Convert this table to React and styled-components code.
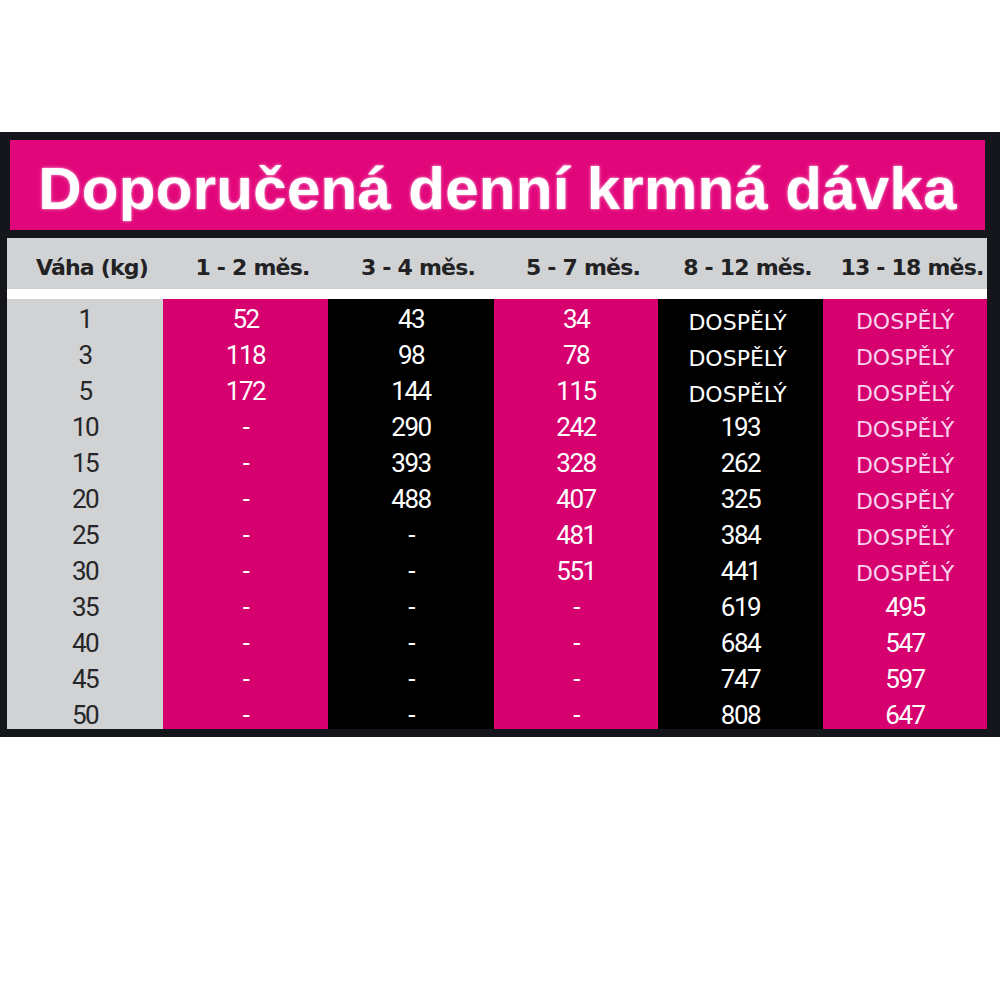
import React from 'react'
import styled, { createGlobalStyle } from 'styled-components'

const GlobalStyle = createGlobalStyle`
  body {
    margin: 0;
    background: #ffffff;
  }
`

const PINK_TITLE = '#e1077b'
const PINK = '#d6006f'
const GRAY = '#d1d2d4'
const FRAME = '#15161c'

const Page = styled.div`
  width: 1000px;
  height: 1000px;
  padding-top: 132px;
  box-sizing: border-box;
  background: #ffffff;
`

const Frame = styled.div`
  background: ${FRAME};
  padding: 8px 13px 8px 7px;
  display: flex;
  flex-direction: column;
  gap: 8px;
`

const TitleBand = styled.div`
  margin-left: 3px;
  margin-right: 2px;
  height: 90px;
  background: ${PINK_TITLE};
  display: flex;
  align-items: center;
  justify-content: center;
  padding-top: 6px;
  box-sizing: border-box;
`

const Title = styled.h1`
  margin: 0;
  font-family: "Liberation Sans", Arial, sans-serif;
  font-weight: 700;
  font-size: 60px;
  letter-spacing: 0.3px;
  color: #ffffff;
  text-shadow: 0 0 2px rgba(255, 190, 225, 0.9), 0 0 4px rgba(255, 170, 215, 0.5);
`

const Table = styled.div`
  display: flex;
  flex-direction: column;
`

const cols = '156px 165px 166px 164px 165px 164px'

const HeaderRow = styled.div`
  display: grid;
  grid-template-columns: ${cols};
  height: 51px;
  background: ${GRAY};
  border-bottom: 10px solid #ffffff;
`

const HeaderCell = styled.div`
  display: flex;
  align-items: center;
  justify-content: center;
  padding: 7px 0 0 14px;
  font-family: "DejaVu Sans", Verdana, sans-serif;
  font-weight: 700;
  font-size: 22px;
  letter-spacing: -0.8px;
  color: #222224;
  white-space: nowrap;
`

const Body = styled.div`
  display: grid;
  grid-template-columns: ${cols};
  height: 430px;
  overflow: hidden;
`

const tones = {
  gray: { bg: GRAY, fg: '#262628', word: '#262628' },
  pink: { bg: PINK, fg: '#ffffff', word: '#f9d2ee' },
  black: { bg: '#000000', fg: '#ffffff', word: '#ffffff' },
}

const Column = styled.div`
  background: ${({ tone }) => tones[tone].bg};
  padding-top: 2px;
  display: flex;
  flex-direction: column;
`

const Cell = styled.div`
  height: 36px;
  line-height: 36px;
  text-align: center;
  font-family: Roboto, "Liberation Sans", sans-serif;
  font-size: 26px;
  letter-spacing: -1.5px;
  font-weight: 400;
  color: ${({ tone }) => tones[tone].fg};
`

const Word = styled.span`
  font-family: "DejaVu Sans", Verdana, sans-serif;
  font-size: 22px;
  font-weight: 400;
  letter-spacing: 0;
  color: ${({ tone }) => tones[tone].word};
  position: relative;
  top: ${({ tone }) => (tone === 'black' ? '2px' : '1px')};
  left: ${({ tone }) => (tone === 'black' ? '-3px' : '0')};
`

const headers = ['Váha (kg)', '1 - 2 měs.', '3 - 4 měs.', '5 - 7 měs.', '8 - 12 měs.', '13 - 18 měs.']

const D = 'DOSPĚLÝ'
const columns = [
  { tone: 'gray', values: ['1', '3', '5', '10', '15', '20', '25', '30', '35', '40', '45', '50'] },
  { tone: 'pink', values: ['52', '118', '172', '-', '-', '-', '-', '-', '-', '-', '-', '-'] },
  { tone: 'black', values: ['43', '98', '144', '290', '393', '488', '-', '-', '-', '-', '-', '-'] },
  { tone: 'pink', values: ['34', '78', '115', '242', '328', '407', '481', '551', '-', '-', '-', '-'] },
  { tone: 'black', values: [D, D, D, '193', '262', '325', '384', '441', '619', '684', '747', '808'] },
  { tone: 'pink', values: [D, D, D, D, D, D, D, D, '495', '547', '597', '647'] },
]

export default function App() {
  return (
    <Page>
      <GlobalStyle />
      <Frame>
        <TitleBand>
          <Title>Doporučená denní krmná dávka</Title>
        </TitleBand>
        <Table>
          <HeaderRow>
            {headers.map(h => (
              <HeaderCell key={h}>{h}</HeaderCell>
            ))}
          </HeaderRow>
          <Body>
            {columns.map((col, ci) => (
              <Column key={ci} tone={col.tone}>
                {col.values.map((v, ri) => (
                  <Cell key={ri} tone={col.tone}>
                    {v === D ? <Word tone={col.tone}>{v}</Word> : v}
                  </Cell>
                ))}
              </Column>
            ))}
          </Body>
        </Table>
      </Frame>
    </Page>
  )
}
